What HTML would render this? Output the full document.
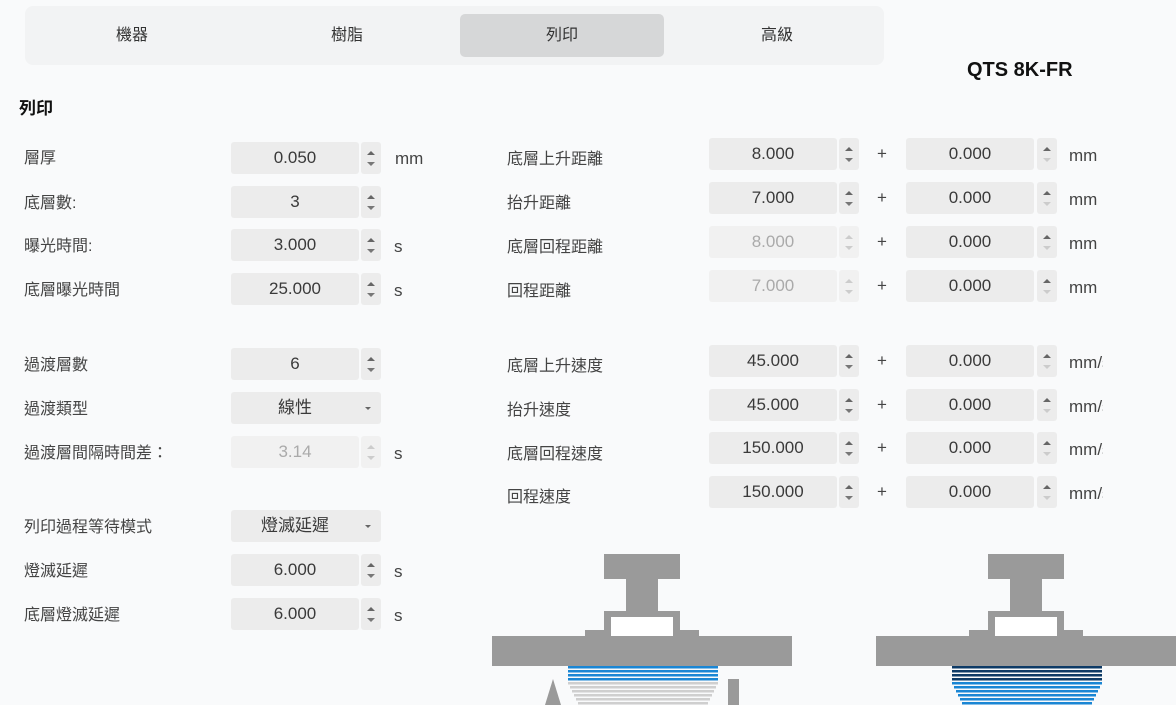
<!DOCTYPE html>
<html><head><meta charset="utf-8">
<style>
*{margin:0;padding:0;box-sizing:border-box}
body{width:1176px;height:705px;background:#f9fafb;font-family:"Liberation Sans","Noto Sans CJK TC",sans-serif;color:#333;position:relative;overflow:hidden}
.a{position:absolute}
.tabs{left:25px;top:6px;width:859px;height:59px;background:#f2f3f4;border-radius:8px}
.tab{top:14px;height:43px;width:204px;line-height:43px;text-align:center;font-size:16px;color:#333}
.act{background:#d6d7d8;border-radius:5px}
.lab{font-size:16px;color:#444;height:22px;line-height:22px}
.in{width:128px;height:32px;background:#ececec;border-radius:3px;text-align:center;line-height:32px;font-size:17px;color:#3a3a3a}
.dis{background:#f1f1f1;color:#aaa}
.sp{width:20px;height:32px;background:#ececec;border-radius:3px}
.sp.dis{background:#f1f1f1}
.sp:before{content:"";position:absolute;left:6px;top:9px;border-left:4px solid transparent;border-right:4px solid transparent;border-bottom:4px solid #666}
.sp:after{content:"";position:absolute;left:6px;top:20px;border-left:4px solid transparent;border-right:4px solid transparent;border-top:4px solid #777}
.sp.dis:before{border-bottom-color:#ccc}.sp.dis:after{border-top-color:#ccc}
.sp.hd:after{border-top-color:#ccc}
.u{font-size:17px;color:#444;line-height:22px;white-space:nowrap}
.cl{width:34px;overflow:hidden}
.cb{width:150px;height:32px;background:#ececec;border-radius:3px;line-height:32px;font-size:17px;color:#3a3a3a}
.cb span{position:absolute;left:0;width:128px;text-align:center}
.cb:after{content:"";position:absolute;right:10px;top:15px;border-left:3px solid transparent;border-right:3px solid transparent;border-top:3px solid #666}
</style></head><body>
<div class="a tabs"></div>
<div class="a tab" style="left:30px">機器</div>
<div class="a tab" style="left:245px">樹脂</div>
<div class="a tab act" style="left:460px">列印</div>
<div class="a tab" style="left:675px">高級</div>
<div class="a" style="left:967px;top:59px;font-size:20px;font-weight:bold;color:#111">QTS 8K-FR</div>
<div class="a" style="left:19px;top:94px;font-size:17px;font-weight:bold;color:#111">列印</div>

<div class="a lab" style="left:24px;top:148px">層厚</div>
<div class="a in" style="left:231px;top:142px">0.050</div><div class="a sp" style="left:361px;top:142px"></div><div class="a u" style="left:395px;top:148px">mm</div>
<div class="a lab" style="left:24px;top:193px">底層數:</div>
<div class="a in" style="left:231px;top:186px">3</div><div class="a sp" style="left:361px;top:186px"></div>
<div class="a lab" style="left:24px;top:236px">曝光時間:</div>
<div class="a in" style="left:231px;top:229px">3.000</div><div class="a sp" style="left:361px;top:229px"></div><div class="a u" style="left:394px;top:236px">s</div>
<div class="a lab" style="left:24px;top:280px">底層曝光時間</div>
<div class="a in" style="left:231px;top:273px">25.000</div><div class="a sp" style="left:361px;top:273px"></div><div class="a u" style="left:394px;top:280px">s</div>

<div class="a lab" style="left:24px;top:355px">過渡層數</div>
<div class="a in" style="left:231px;top:348px">6</div><div class="a sp" style="left:361px;top:348px"></div>
<div class="a lab" style="left:24px;top:399px">過渡類型</div>
<div class="a cb" style="left:231px;top:392px"><span>線性</span></div>
<div class="a lab" style="left:24px;top:443px">過渡層間隔時間差：</div>
<div class="a in dis" style="left:231px;top:436px">3.14</div><div class="a sp dis" style="left:361px;top:436px"></div><div class="a u" style="left:394px;top:443px">s</div>

<div class="a lab" style="left:24px;top:517px">列印過程等待模式</div>
<div class="a cb" style="left:231px;top:510px"><span>燈滅延遲</span></div>
<div class="a lab" style="left:24px;top:561px">燈滅延遲</div>
<div class="a in" style="left:231px;top:554px">6.000</div><div class="a sp" style="left:361px;top:554px"></div><div class="a u" style="left:394px;top:561px">s</div>
<div class="a lab" style="left:24px;top:605px">底層燈滅延遲</div>
<div class="a in" style="left:231px;top:598px">6.000</div><div class="a sp" style="left:361px;top:598px"></div><div class="a u" style="left:394px;top:605px">s</div>

<div class="a lab" style="left:507px;top:149px">底層上升距離</div>
<div class="a in" style="left:709px;top:138px">8.000</div><div class="a sp" style="left:839px;top:138px"></div><div class="a u" style="left:877px;top:143px">+</div>
<div class="a in" style="left:906px;top:138px">0.000</div><div class="a sp hd" style="left:1037px;top:138px"></div><div class="a u" style="left:1069px;top:145px">mm</div>

<div class="a lab" style="left:507px;top:193px">抬升距離</div>
<div class="a in" style="left:709px;top:182px">7.000</div><div class="a sp" style="left:839px;top:182px"></div><div class="a u" style="left:877px;top:187px">+</div>
<div class="a in" style="left:906px;top:182px">0.000</div><div class="a sp hd" style="left:1037px;top:182px"></div><div class="a u" style="left:1069px;top:189px">mm</div>

<div class="a lab" style="left:507px;top:237px">底層回程距離</div>
<div class="a in dis" style="left:709px;top:226px">8.000</div><div class="a sp dis" style="left:839px;top:226px"></div><div class="a u" style="left:877px;top:231px">+</div>
<div class="a in" style="left:906px;top:226px">0.000</div><div class="a sp hd" style="left:1037px;top:226px"></div><div class="a u" style="left:1069px;top:233px">mm</div>

<div class="a lab" style="left:507px;top:281px">回程距離</div>
<div class="a in dis" style="left:709px;top:270px">7.000</div><div class="a sp dis" style="left:839px;top:270px"></div><div class="a u" style="left:877px;top:275px">+</div>
<div class="a in" style="left:906px;top:270px">0.000</div><div class="a sp hd" style="left:1037px;top:270px"></div><div class="a u" style="left:1069px;top:277px">mm</div>

<div class="a lab" style="left:507px;top:356px">底層上升速度</div>
<div class="a in" style="left:709px;top:345px">45.000</div><div class="a sp" style="left:839px;top:345px"></div><div class="a u" style="left:877px;top:350px">+</div>
<div class="a in" style="left:906px;top:345px">0.000</div><div class="a sp hd" style="left:1037px;top:345px"></div><div class="a u cl" style="left:1069px;top:352px">mm/s</div>

<div class="a lab" style="left:507px;top:400px">抬升速度</div>
<div class="a in" style="left:709px;top:389px">45.000</div><div class="a sp" style="left:839px;top:389px"></div><div class="a u" style="left:877px;top:394px">+</div>
<div class="a in" style="left:906px;top:389px">0.000</div><div class="a sp hd" style="left:1037px;top:389px"></div><div class="a u cl" style="left:1069px;top:396px">mm/s</div>

<div class="a lab" style="left:507px;top:444px">底層回程速度</div>
<div class="a in" style="left:709px;top:432px">150.000</div><div class="a sp" style="left:839px;top:432px"></div><div class="a u" style="left:877px;top:437px">+</div>
<div class="a in" style="left:906px;top:432px">0.000</div><div class="a sp hd" style="left:1037px;top:432px"></div><div class="a u cl" style="left:1069px;top:439px">mm/s</div>

<div class="a lab" style="left:507px;top:487px">回程速度</div>
<div class="a in" style="left:709px;top:476px">150.000</div><div class="a sp" style="left:839px;top:476px"></div><div class="a u" style="left:877px;top:481px">+</div>
<div class="a in" style="left:906px;top:476px">0.000</div><div class="a sp hd" style="left:1037px;top:476px"></div><div class="a u cl" style="left:1069px;top:483px">mm/s</div>

<svg class="a" style="left:0;top:0" width="1176" height="705">
<g fill="#9a9a9a">
<rect x="604" y="554" width="76" height="25"/><rect x="626" y="579" width="32" height="32"/>
<rect x="604" y="611" width="76" height="25"/><rect x="585" y="630" width="20" height="6"/><rect x="679" y="630" width="20" height="6"/>
<rect x="492" y="636" width="300" height="30"/>
<rect x="988" y="554" width="76" height="25"/><rect x="1010" y="579" width="32" height="32"/>
<rect x="988" y="611" width="76" height="25"/><rect x="969" y="630" width="20" height="6"/><rect x="1063" y="630" width="20" height="6"/>
<rect x="876" y="636" width="300" height="30"/>
<polygon points="545,705 553,679 561,705"/>
<rect x="728" y="679" width="11" height="26"/>
</g>
<rect x="611" y="617" width="62" height="19" fill="#fff"/><rect x="995" y="617" width="62" height="19" fill="#fff"/>
<g fill="#1a86d4">
<rect x="568" y="666" width="150" height="2.5"/><rect x="568" y="670" width="150" height="2.5"/><rect x="568" y="674" width="150" height="2.5"/><rect x="568" y="678" width="150" height="2.5"/>
</g>
<g fill="#cfcfcf">
<rect x="568" y="682" width="150" height="2.5"/><rect x="570" y="686" width="146" height="2.5"/><rect x="572" y="690" width="142" height="2.5"/><rect x="574" y="694" width="138" height="2.5"/><rect x="576" y="698" width="134" height="2.5"/><rect x="578" y="702" width="130" height="2.5"/>
</g>
<g fill="#0d3a66">
<rect x="952" y="666" width="150" height="2.5"/><rect x="952" y="670" width="150" height="2.5"/><rect x="952" y="674" width="150" height="2.5"/><rect x="952" y="678" width="150" height="2.5"/>
</g>
<g fill="#1a86d4">
<rect x="952" y="682" width="150" height="2.5"/><rect x="954" y="686" width="146" height="2.5"/><rect x="956" y="690" width="142" height="2.5"/><rect x="958" y="694" width="138" height="2.5"/><rect x="960" y="698" width="134" height="2.5"/><rect x="962" y="702" width="130" height="2.5"/>
</g>
</svg>
</body></html>
